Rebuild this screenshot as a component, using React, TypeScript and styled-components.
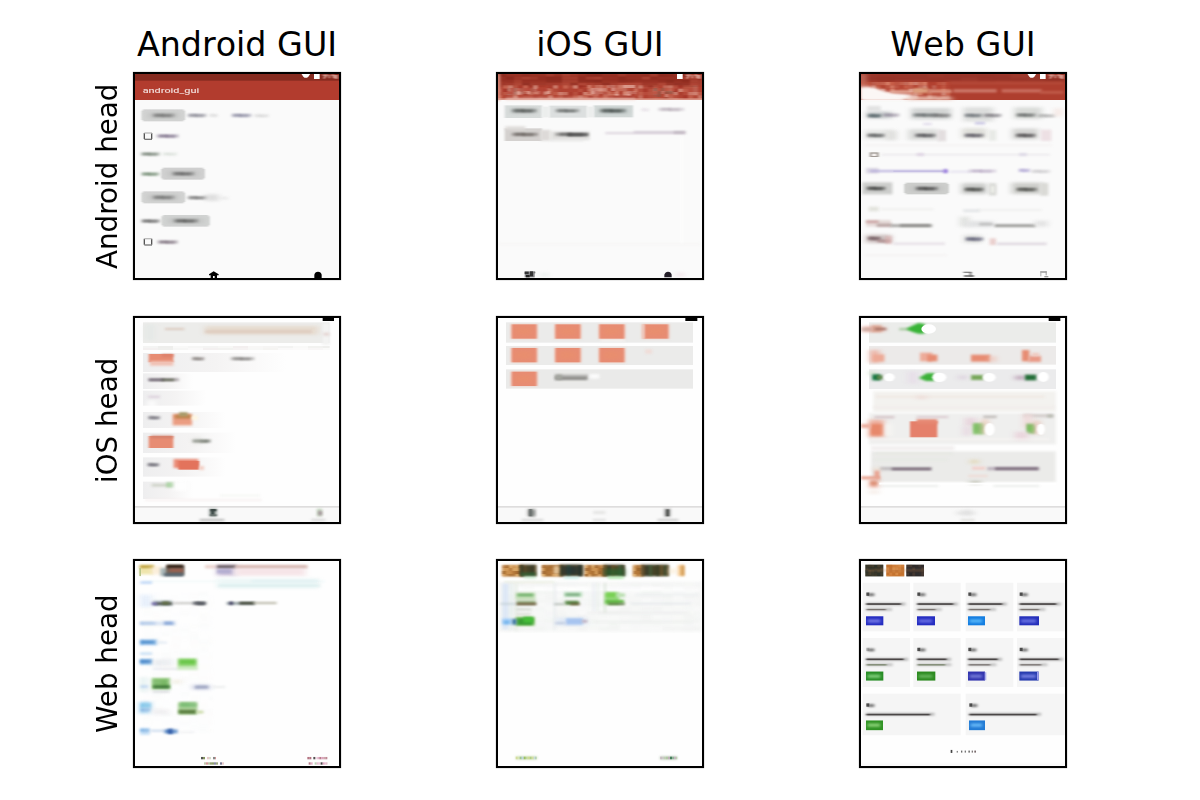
import React from "react";
import styled, { createGlobalStyle } from "styled-components";

const GlobalStyle = createGlobalStyle`
  * { box-sizing: border-box; }
  body { margin: 0; background: #fff; color: #000; font-family: "DejaVu Sans", sans-serif; }
`;

const Figure = styled.main`
  width: 1200px;
  height: 800px;
  overflow: hidden;
  padding: 25px 0 0 92px;
  display: flex;
  flex-direction: column;
`;

const Titles = styled.header`
  display: flex;
  gap: 155px;
  height: 47px;
  padding-left: 41px;
`;

const Title = styled.h2`
  margin: 0;
  width: 208px;
  text-align: center;
  font-size: 33.33px;
  line-height: 40px;
  font-weight: 400;
  font-kerning: none;
  white-space: nowrap;
`;

const Rows = styled.div`
  display: grid;
  grid-template-rows: 208px 208px 209px;
  row-gap: 35.5px;
`;

const Row = styled.section`
  display: flex;
`;

const RowLabel = styled.h3`
  margin: 0;
  width: 41px;
  padding-right: 2px;
  writing-mode: vertical-rl;
  transform: rotate(180deg);
  text-align: center;
  font-size: 27.78px;
  line-height: 28px;
  font-weight: 400;
  font-kerning: none;
  white-space: nowrap;
`;

const Plots = styled.div`
  display: flex;
  gap: 155px;
`;

const Frame = styled.figure`
  margin: 0;
  width: 208px;
  border: 2px solid #000;
  background: #fff;
  box-shadow: 0 0 1px rgba(0, 0, 0, 0.5);
`;

const Drawing = styled.svg`
  display: block;
  width: 204px;
  height: 100%;
`;

// x, y, width, height, fill, blur level (0-4), opacity
type Mark = [number, number, number, number, string, number?, number?];

function Marks({ items }: { items: Mark[] }) {
  return (
    <>
      {items.map(([x, y, w, h, fill, blur = 1, opacity = 1], i) => (
        <rect key={i} x={x} y={y} width={w} height={h} fill={fill} opacity={opacity}
          filter={blur ? `url(#soft${blur})` : undefined} />
      ))}
    </>
  );
}

// Deterministic patch of coloured cells, like the texture of a generated image.
function Grain({ x, y, w, h, cw, ch, colors, seed, opacity = 1, density = 1, blur = 1 }: {
  x: number; y: number; w: number; h: number; cw: number; ch: number;
  colors: string[]; seed: number; opacity?: number; density?: number; blur?: number;
}) {
  let s = seed * 7919 + 17;
  const rnd = () => {
    s = (s * 16807) % 2147483647;
    return s / 2147483647;
  };
  const cells: React.ReactElement[] = [];
  for (let b = y; b < y + h; b += ch) {
    for (let a = x; a < x + w; a += cw) {
      const c = colors[Math.floor(rnd() * colors.length)];
      const o = 0.3 + rnd() * 0.7;
      if (rnd() < density) {
        cells.push(<rect key={`${a}-${b}`} x={a} y={b} width={Math.min(cw, x + w - a)}
          height={Math.min(ch, y + h - b)} fill={c} opacity={o * opacity} />);
      }
    }
  }
  return <g filter={`url(#soft${blur})`}>{cells}</g>;
}

function Canvas({ x, y, bg, children }: { x: number; y: number; bg: string; children: React.ReactNode }) {
  return (
    <Drawing viewBox={`${x} ${y} 612 612`} preserveAspectRatio="none">
      <rect x={x} y={y} width={612} height={612} fill={bg} />
      {children}
    </Drawing>
  );
}

// A word too small to read: a dark core in a lighter smear.
const word = (x: number, y: number, w: number, c = "#555", o = 0.7): Mark[] => [
  [x + 2, y - 4, w - 4, 8, c, 2, o * 0.45],
  [x + w * 0.14, y - 3, w * 0.35, 6, c, 2, o * 0.65],
  [x + w * 0.42, y - 2, w * 0.4, 6, c, 2, o * 0.6],
];

const pill = (x: number, y: number, w: number, h: number, c = "#d2d3d2", t = "#555"): Mark[] => [
  [x + 5, y + 1, w - 10, h - 2, c, 4], [x + 1, y + 5, w - 2, h - 10, c, 4],
  [x + 22, y + 10, w - 44, h - 20, "#b4b5b4", 3, 0.5],
  ...word(x + w * 0.24, y + h / 2, w * 0.53, t, 0.85),
];

const StatusDots = ({ wifi }: { wifi?: boolean }) => (
  <g>
    {wifi && <path d="M664 161H691L685 170Q677 177 670 170Z" fill="#fff" filter="url(#soft1)" />}
    <rect x="702" y="161" width="17" height="16" fill="#fff" filter="url(#soft1)" />
    <path d="M728 166H740L731 176M748 165V175M754 166H761V175M766 165V176M771 165V176" fill="none" stroke="#e5b0a5" strokeWidth="5" filter="url(#soft4)" opacity=".8" />
  </g>
);

function AndroidAndroid() {
  return (
    <Canvas x={165} y={162} bg="#fafafa">
      <rect x="165" y="161" width="612" height="22" fill="#862b20" />
      <rect x="165" y="182" width="612" height="58" fill="#b23c2e" />
      <StatusDots wifi />
      <text x="188" y="219" fontSize="23" fontWeight="500" fontFamily="Roboto, sans-serif" fill="#fff" opacity=".8" textLength="170" lengthAdjust="spacingAndGlyphs" filter="url(#soft1)">android_gui</text>
      <Marks items={[
        ...pill(184, 267, 132, 38), ...word(320, 286, 62, "#556", 0.8), ...word(386, 286, 30, "#bbb", 0.5),
        ...word(452, 286, 65, "#557", 0.8), ...word(520, 287, 50, "#999", 0.35),
        ...word(228, 348, 70, "#546", 0.9),
        ...word(180, 402, 62, "#454", 0.85), ...word(245, 402, 50, "#aba", 0.4),
        ...word(181, 462, 60, "#464", 0.9), ...pill(243, 442, 132, 38, "#d0d0d0", "#444"),
        ...pill(184, 513, 132, 38), ...word(320, 533, 64, "#444", 0.85),
        [375, 523, 42, 20, "#ccc", 3, 0.6], ...word(420, 534, 30, "#ccc", 0.3),
        ...word(181, 603, 62, "#444", 1), ...pill(244, 584, 146, 37, "#d1d3d2", "#333"),
        ...word(230, 666, 66, "#545", 0.9),
      ]} />
      {[338, 655].map((y) => (
        <g key={y} filter="url(#soft1)" fill="none" strokeWidth="4">
          <path d={`M193 ${y + 1}V${y + 19}M215 ${y + 1}V${y + 19}`} stroke="#555" />
          <path d={`M193 ${y + 1}H216`} stroke="#bbb" /><path d={`M193 ${y + 20}H216`} stroke="#777" />
        </g>
      ))}
      <path d="M387 763L401 754L416 763V766H411V774H404V768H399V774H392V766H387Z" fill="#000" filter="url(#soft1)" />
      <path d="M703 774V764Q705 755 714 755Q723 755 725 764V774Z" fill="#000" filter="url(#soft1)" />
    </Canvas>
  );
}

function AndroidIos() {
  return (
    <Canvas x={33} y={162} bg="#fafafa">
      <rect x="33" y="161" width="612" height="79" fill="#b04535" />
      <rect x="33" y="161" width="612" height="26" fill="#973023" filter="url(#soft2)" />
      <Grain x={33} y={161} w={612} h={40} cw={24} ch={9} colors={["#84261b", "#b34b3a", "#963023"]} seed={4} opacity={0.6} blur={4} />
      <Grain x={33} y={196} w={612} h={42} cw={15} ch={10} colors={["#bd5140", "#cf6f5a", "#b43d2d", "#dc9a8a", "#a53024"]} seed={9} opacity={0.7} blur={4} />
      <Grain x={60} y={204} w={130} h={20} cw={10} ch={9} colors={["#f0c2b6", "#b8493b", "#b07a6d"]} seed={11} opacity={0.7} blur={4} />
      <Grain x={300} y={195} w={150} h={32} cw={12} ch={9} colors={["#f0c2b6", "#bf5441", "#db8d79"]} seed={13} opacity={0.7} blur={4} />
      <Grain x={500} y={204} w={65} h={30} cw={11} ch={9} colors={["#f0c2b6", "#bf5441", "#8a5b4b"]} seed={15} opacity={0.7} blur={4} />
      <g transform="translate(-132 0)"><StatusDots /></g>
      <Marks items={[
        [31, 161, 8, 80, "#e5a08f", 2], [33, 235, 612, 5, "#e9b3a5", 1, 0.7],
        [55, 233, 390, 8, "#f2cdc4", 2, 0.6],
        [53, 256, 112, 38, "#d7dbda", 4], [187, 257, 113, 36, "#dcdfdf", 4], [320, 256, 118, 36, "#d2d8d7", 4],
        [165, 260, 22, 32, "#eceeed", 4], [301, 260, 19, 32, "#eceeed", 4],
        [340, 265, 80, 16, "#a9b2b0", 3, 0.7], [75, 265, 70, 16, "#b2b7b5", 3, 0.7],
        ...word(72, 272, 79, "#3c403e", 1), ...word(203, 272, 76, "#3c403e", 0.9), ...word(336, 272, 82, "#2d3432", 1),
        ...word(511, 268, 83, "#8c7b8c", 0.65), ...word(460, 269, 30, "#cabaca", 0.4),
        [53, 325, 112, 38, "#d4d1cf", 4], [55, 319, 60, 10, "#dedbd9", 2], [160, 330, 30, 32, "#dddad8", 2], [190, 334, 118, 26, "#e1e0de", 2],
        ...word(72, 343, 83, "#4c4541", 1), ...word(203, 343, 104, "#3a3a3a", 1), [240, 341, 62, 6, "#444", 2],
        [355, 337, 240, 5, "#c9bccb", 2, 0.7], [440, 333, 155, 6, "#b09db4", 2, 0.4], [560, 334, 35, 7, "#aaa0aa", 2, 0.6],
        [190, 358, 100, 7, "#e5e5e5", 2, 0.6], [33, 670, 610, 5, "#f7f6f5", 2], [578, 350, 12, 320, "#fcfcfb", 2],
        [113, 754, 30, 18, "#848487", 1], [113, 755, 12, 7, "#333"], [129, 754, 9, 15, "#333"], [117, 765, 11, 7, "#222"], [140, 755, 5, 5, "#777"],
        [164, 758, 18, 12, "#dfe7e3", 3, 0.7], [570, 758, 20, 12, "#eedce2", 3, 0.8],
      ]} />
      <path d="M532 772V764Q535 755 543 755Q552 755 554 764V772Z" fill="#231e28" filter="url(#soft1)" />
    </Canvas>
  );
}

function AndroidWeb() {
  return (
    <Canvas x={33} y={162} bg="#fafafa">
      <rect x="33" y="161" width="612" height="79" fill="#ae3e2e" />
      <rect x="33" y="161" width="612" height="22" fill="#97352a" filter="url(#soft2)" />
      <Grain x={33} y={164} w={612} h={22} cw={50} ch={9} colors={["#9a3326", "#a94333", "#8f2f22"]} seed={6} opacity={0.5} blur={2} />
      <Grain x={50} y={186} w={250} h={52} cw={14} ch={10} colors={["#c85f49", "#d67d66", "#b84735", "#e0a291"]} seed={3} blur={4} />
      <path d="M33 196L80 206L110 216L180 222L205 240H33Z" fill="#fbf7f5" filter="url(#soft3)" />
      <path d="M33 202L75 208L105 220L150 230L165 240H33Z" fill="#fbf7f5" filter="url(#soft2)" />
      <path d="M180 230H300L310 240H170Z" fill="#ecc5b8" filter="url(#soft3)" />
      <g transform="translate(-132 0)"><StatusDots wifi /></g>
      <Marks items={[
        [33, 161, 12, 40, "#dc907f", 3], [125, 211, 65, 8, "#e4ab99", 2], [190, 205, 45, 14, "#dc9e7c", 2],
        [236, 210, 70, 8, "#dc9581", 2], [310, 208, 130, 9, "#d07f70", 2], [455, 208, 120, 9, "#cc7364", 2],
        [570, 213, 70, 8, "#c05d4b", 2], [300, 187, 340, 4, "#bc5644", 2],
        [52, 258, 40, 14, "#e2e2e2", 2], [50, 275, 75, 20, "#c6cacb", 3], [183, 264, 120, 34, "#d3d5d4", 3],
        [340, 262, 90, 42, "#dcdddc", 3], [493, 262, 82, 35, "#d9dbd8", 3],
        ...word(50, 287, 47, "#33454b", 1), ...word(97, 285, 55, "#776a82", 0.7),
        ...word(185, 285, 80, "#454c4e", 0.9), ...word(245, 286, 60, "#4c4b4d", 0.8),
        ...word(340, 286, 60, "#454c53", 0.9), ...word(398, 286, 60, "#534f57", 0.8),
        ...word(495, 285, 65, "#414645", 0.9), ...word(560, 287, 60, "#777", 0.6),
        [375, 306, 30, 7, "#c6c3e2", 2], [220, 310, 25, 4, "#d3cae2", 2], [615, 265, 20, 24, "#f5e6e2", 3],
        [45, 330, 85, 28, "#e4e5e3", 3], [110, 332, 30, 28, "#e0e0de", 3], [175, 328, 90, 32, "#d9dad8", 3], [263, 330, 25, 34, "#e3dedf", 2],
        [335, 325, 75, 30, "#deded9", 3], [417, 330, 22, 32, "#e8eae6", 2], [487, 326, 78, 32, "#d3d3d1", 3],
        [573, 329, 31, 34, "#ede0e4", 2],
        ...word(48, 346, 59, "#363839", 1), ...word(192, 346, 68, "#2f2e33", 1), ...word(340, 346, 64, "#383543", 1), ...word(494, 346, 66, "#2b282b", 1),
        [45, 374, 560, 3, "#f2edee", 2], [59, 397, 27, 14, "#a19b96", 4], [65, 401, 15, 7, "#f7f3f1", 4],
        [95, 402, 505, 4, "#e2dfe3", 2, 0.8], [200, 400, 22, 7, "#dccfe1", 2], [508, 400, 22, 7, "#d9d4e4", 2],
        [48, 444, 38, 16, "#dad6e2", 2], [60, 451, 233, 5, "#b0a6da", 2], [130, 452, 150, 3, "#b3aadc", 1, 0.6], [281, 448, 11, 11, "#9070dc", 2], [300, 453, 60, 4, "#ddd8eb", 2],
        ...word(353, 453, 88, "#a18eb2", 0.8), ...word(503, 451, 40, "#8272bd", 0.7), ...word(540, 454, 64, "#a7a5aa", 0.6),
        [37, 487, 90, 36, "#cccdcb", 2], ...word(47, 505, 62, "#181917", 1),
        ...pill(162, 487, 135, 37, "#cdcecc", "#111"), [335, 490, 75, 32, "#c8c9c7", 3], ...word(340, 508, 64, "#242623", 1),
        [417, 490, 22, 36, "#d6d7d3", 2], [423, 497, 10, 22, "#f0f1ec", 2], [485, 488, 92, 34, "#cccdc9", 3], ...word(496, 508, 68, "#2b2c28", 1),
        [571, 489, 24, 38, "#dadad6", 2], [56, 560, 30, 14, "#e3e4dd", 2], [90, 566, 160, 4, "#ececea", 2], [340, 568, 50, 8, "#e2e4e6", 2],
        [385, 568, 190, 4, "#ececea", 2], [48, 600, 75, 20, "#e6dcda", 2], [48, 602, 38, 7, "#cba1a0", 2], [80, 611, 45, 9, "#b9a4a3", 2],
        [122, 613, 125, 8, "#a5a4a2", 2], [150, 614, 90, 5, "#7c7c7a", 2], [330, 590, 28, 30, "#e0e2df", 3], [350, 603, 80, 18, "#e1e2e3", 3],
        [388, 609, 40, 7, "#bbb", 2], [434, 613, 123, 8, "#969693", 2], [555, 602, 38, 18, "#e3e3e3", 3],
        [48, 644, 75, 25, "#cec2c1", 3], ...word(50, 655, 45, "#583e45", 1), ...word(78, 663, 47, "#9e7678", 0.8),
        [106, 648, 20, 24, "#dba8a7", 2, 0.5], [130, 668, 155, 6, "#e3dce3", 2], [343, 645, 50, 24, "#dbdcda", 3], ...word(343, 657, 60, "#3e3e5c", 1),
        [419, 655, 19, 20, "#ead0ce", 2], [440, 668, 150, 7, "#ded7df", 2], [45, 704, 245, 3, "#f2edee", 2],
        [340, 755, 24, 4, "#888", 4], [342, 766, 30, 4, "#555", 4], [359, 756, 5, 14, "#666", 4],
        [571, 754, 19, 4, "#888"], [571, 754, 3, 15, "#aaa"], [587, 754, 3, 12, "#999"], [583, 768, 12, 4, "#999"],
      ]} />
    </Canvas>
  );
}

const coral = "#e78c73";

function TabBar({ x }: { x: number }) {
  return <><rect x={x} y="588" width="612" height="50" fill="#f9f9f9" /><rect x={x} y="588" width="612" height="5" fill="#dedddd" /></>;
}

function IosAndroid() {
  return (
    <Canvas x={165} y={24} bg="#fefefe">
      <rect x="189" y="37" width="560" height="62" fill="#ececea" filter="url(#soft1)" />
      <Grain x={189} y={108} w={560} h={12} cw={45} ch={6} colors={["#eeeeec", "#f4f3f1", "#f0ecec"]} seed={5} />
      {[[129, 57, 430], [190, 47, 150], [242, 45, 190], [306, 48, 250], [368, 61, 280], [442, 58, 250], [515, 52, 150]].map(([y, h, w]) => (
        <rect key={y} x="189" y={y} width={w} height={h} fill="url(#fadeRow)" filter="url(#soft1)" />
      ))}
      <Marks items={[
        [195, 43, 28, 48, "#dfe6e4", 3, 0.6], [255, 54, 58, 6, "#dccabf", 2], [375, 48, 340, 26, "#e6dbcf", 3],
        [375, 61, 320, 8, "#dcc6ba", 2, 0.8], [727, 40, 22, 65, "#f3f3f2", 2], [730, 68, 18, 9, "#e5d5d2", 2],
        [206, 132, 74, 25, coral, 4], [210, 153, 70, 14, "#f0c0b3", 2], [246, 133, 34, 7, "#d97c69", 2], ...word(333, 146, 43, "#544b47", 0.8), ...word(450, 146, 75, "#4e4b49", 0.8),
        [205, 205, 92, 8, "#ada6ab", 2], [207, 207, 45, 5, "#584f60", 2], [245, 207, 38, 5, "#485139", 2],
        [205, 257, 35, 7, "#ddd2dd", 2], [205, 272, 20, 20, "#fff", 3],
        ...word(202, 323, 41, "#464350", 0.9), [278, 312, 58, 34, "#eb9d82", 2], [284, 314, 50, 12, "#b98042", 2, 0.8], [297, 307, 26, 12, "#a59b68", 2], [335, 317, 18, 13, "#fff6e0", 2],
        [206, 378, 74, 36, coral, 4], [213, 377, 66, 7, "#cf806d", 2], ...word(335, 393, 60, "#2c3527", 1), [340, 380, 26, 24, "#dfe0da", 3, 0.5],
        ...word(200, 464, 40, "#454350", 1), [281, 447, 74, 27, "#ea8a75", 2], [295, 453, 62, 26, "#e3735c", 4], [359, 468, 12, 12, "#f3c9bd", 2],
        [215, 521, 67, 9, "#d0d4ca", 2], [259, 517, 22, 15, "#a9d3a2", 2], [282, 514, 42, 28, "#fefefe", 3],
        [195, 568, 350, 5, "#f7f0f0", 2], [420, 554, 120, 5, "#f4f6f2", 2],
      ]} />
      <TabBar x={165} />
      <Marks items={[
        [728, 22, 34, 11, "#000"], [387, 596, 24, 23, "#a3aba7", 2], [393, 597, 10, 20, "#344240", 4], [392, 597, 17, 7, "#3a4644", 4],
        [390, 613, 20, 6, "#6a7471", 4], [359, 627, 74, 6, "#b8b8b8", 2], [711, 596, 15, 23, "#c3d4be", 2], [715, 603, 11, 13, "#a18f97", 2], [694, 627, 42, 5, "#d0d0d0", 2],
      ]} />
    </Canvas>
  );
}

function IosIos() {
  return (
    <Canvas x={33} y={24} bg="#fefefe">
      <Marks items={[
        [57, 37, 561, 61, "#ebebea"], [57, 108, 561, 57, "#ebebea"], [57, 178, 561, 58, "#eaeae9"],
        [475, 118, 20, 13, "#f0dcd7", 2], [340, 87, 75, 8, "#f4f2f0", 2],
        [205, 193, 98, 16, "#bfbebc", 2], [205, 200, 95, 9, "#8a8986", 2], [205, 194, 20, 15, "#a3a59f", 2], [308, 192, 29, 14, "#fbfbfb", 2],
        ...([[74, 43], [205, 43], [337, 43], [469, 43], [74, 114], [205, 114], [337, 114], [74, 185]].flatMap(([x, y]): Mark[] => [
          [x - 2, y - 1, 80, 45, "#f0cbbf", 2, 0.8], [x, y, 75, 43, coral, 4], [x + 12, y + 10, 48, 22, "#eb9167", 3, 0.4],
        ])),
        [464, 43, 9, 43, "#eecbc0", 4],
      ]} />
      <TabBar x={33} />
      <Marks items={[
        [595, 22, 36, 11, "#000"], [119, 597, 28, 22, "#d0cece", 2], [126, 599, 18, 20, "#8f9390", 2], [126, 597, 9, 22, "#626866", 4],
        [531, 596, 20, 24, "#aaa", 2], [538, 598, 8, 21, "#424542", 4], [319, 603, 36, 9, "#e5e5e4", 2],
        [104, 627, 65, 6, "#d4d4d4", 2], [318, 627, 38, 6, "#ddd", 2], [512, 627, 62, 6, "#cbcbcb", 2],
      ]} />
    </Canvas>
  );
}

function IosWeb() {
  return (
    <Canvas x={33} y={24} bg="#fefefe">
      <Marks items={[
        [57, 37, 561, 61, "#ebecea"], [57, 108, 561, 56, "#eceae9"], [57, 178, 561, 59, "#ebebec"],
        [70, 244, 548, 62, "#f3f2ef", 2], [57, 310, 561, 93, "#efefee", 2], [63, 424, 554, 92, "#ebebe9", 2], [63, 407, 250, 15, "#f3f0f0", 2],
        [36, 49, 66, 17, "#e8b3a8", 3], [65, 46, 30, 20, "#dba896", 2], [74, 54, 35, 6, "#9f6b60", 2], [36, 55, 28, 6, "#bfa9a2", 2],
        [148, 54, 45, 7, "#a8c9a0", 2],
        [60, 120, 28, 38, "#edb6a8", 3], [68, 133, 35, 22, "#edaa97", 2], [210, 128, 37, 26, "#edab99", 2], [232, 134, 30, 20, coral, 2],
        [363, 134, 58, 21, coral, 2], [421, 138, 15, 18, "#efc4b8", 3], [516, 120, 22, 34, coral, 2], [536, 138, 37, 18, "#e99b88", 2], [545, 129, 23, 8, "#f1c5ba", 2],
        [60, 184, 18, 12, "#d3e3cc", 3], [67, 193, 24, 18, "#0e733e", 2], [80, 196, 18, 12, "#5d8547", 2],
        [363, 195, 37, 15, "#78a85b", 2], [325, 196, 26, 12, "#ded4df", 3], [495, 197, 34, 12, "#c0a9bb", 3], [525, 194, 34, 17, "#246e38", 2],
        [173, 185, 30, 36, "#e7dfe8", 3], [70, 290, 545, 4, "#f0eae8", 2], [78, 257, 505, 6, "#f0e8e2", 2],
        [200, 257, 30, 10, "#eeddd8", 3],
        [57, 329, 45, 53, "#eeae9c", 3], [62, 342, 38, 34, "#e7886b", 2], [33, 342, 30, 12, "#edaf9f", 2], [73, 318, 60, 7, "#d4c4c8", 2],
        [106, 340, 16, 38, "#faf9f5", 3], [180, 334, 82, 48, "#e5806b", 4], [200, 327, 62, 14, "#e68873", 2], [200, 318, 95, 6, "#dccbd0", 2],
        [345, 323, 34, 25, "#e8d5dd", 3], [339, 349, 25, 28, "#e8dbe2", 3], [369, 339, 32, 34, "#8cc573", 2], [379, 345, 20, 20, "#74b85c", 3], [397, 327, 16, 44, "#ebcab8", 3],
        [400, 317, 40, 7, "#bfbab8", 2], [520, 313, 90, 9, "#d3cccb", 2], [592, 314, 17, 8, "#b5b9af", 2],
        [520, 312, 25, 43, "#f0dada", 3], [529, 341, 26, 30, "#83b968", 2], [537, 349, 16, 16, "#71c157", 2], [553, 331, 15, 42, "#e8c0b2", 3],
        [495, 365, 40, 25, "#ead6dd", 3], [60, 386, 540, 4, "#f8f4f3", 2],
        [90, 471, 155, 10, "#c0bcbf", 2], [125, 474, 118, 6, "#6f5d6e", 2], [412, 471, 155, 10, "#beb4be", 2], [435, 473, 130, 6, "#685667", 2],
        [73, 428, 235, 5, "#e4e7e0", 2], [73, 447, 220, 4, "#e4e9e1", 2], [360, 449, 26, 12, "#e3d9bb", 3], [366, 470, 40, 9, "#f2cfca", 2],
        [73, 473, 15, 10, "#eedbca", 3], [73, 482, 16, 24, "#e8a391", 2], [33, 499, 57, 9, "#e8a18e", 2], [60, 504, 24, 30, "#ebaf9f", 3], [61, 514, 20, 12, "#dc9178", 2],
        [355, 495, 58, 6, "#efdad4", 2], [359, 513, 34, 9, "#bcbdaf", 3], [88, 518, 530, 6, "#fff"], [90, 526, 175, 4, "#e5e7e4", 2], [430, 526, 138, 4, "#e5e7e4", 2], [57, 540, 30, 12, "#f6eee9", 3],
      ]} />
      <path d="M168 57L185 48L205 39L225 42L223 71H205L188 66Z" fill="#38b437" filter="url(#soft2)" />
      <ellipse cx="236" cy="57" rx="22" ry="14" fill="#fff" filter="url(#soft1)" />
      <path d="M206 204L230 190L253 189V213H228Z" fill="#3bb138" filter="url(#soft2)" />
      {[[118, 202, 16, 12], [268, 202, 21, 14], [418, 202, 19, 13], [580, 201, 16, 15], [419, 358, 15, 19], [573, 358, 12, 17]].map(([a, b, rx, ry]) => (
        <ellipse key={`${a}-${b}`} cx={a} cy={b} rx={rx} ry={ry} fill="#fff" filter="url(#soft4)" />
      ))}
      <TabBar x={33} />
      <Marks items={[[596, 22, 35, 11, "#000"], [320, 604, 54, 10, "#e2e2e1", 3], [344, 599, 14, 18, "#dedede", 3], [332, 627, 42, 6, "#deddda", 2]]} />
    </Canvas>
  );
}

function WebAndroid() {
  return (
    <Canvas x={165} y={28} bg="#fefefe">
      <Marks items={[
        [178, 40, 43, 28, "#efe5ac", 2], [180, 41, 42, 8, "#bc9c36", 2], [178, 49, 5, 24, "#b8c58a"], [217, 43, 29, 25, "#fbecd5", 3],
        [241, 49, 70, 24, "#a8b5b7", 2], [258, 40, 54, 30, "#77675b", 2], [261, 40, 49, 9, "#2e2013", 2], [269, 51, 40, 10, "#9a5f50", 2], [252, 65, 58, 8, "#51616f", 2],
        [375, 40, 308, 10, "#ecd5cf", 2], [411, 40, 57, 32, "#cfc3da", 3], [411, 41, 57, 8, "#5f5659", 2], [411, 53, 44, 12, "#b1acd0", 2], [466, 46, 210, 26, "#f6e5e8", 3], [466, 42, 214, 6, "#cbada6", 2],
        [190, 87, 545, 4, "#eef8f9", 2], [410, 80, 307, 30, "#edf7f7", 3], [415, 99, 304, 5, "#d5ebeb", 2], [515, 86, 200, 4, "#daedf1", 2], [181, 89, 35, 7, "#bad4f7", 2],
        [181, 128, 34, 38, "#e6effc", 3], [219, 146, 58, 16, "#b4c2c9", 2], [227, 152, 50, 6, "#12160c", 2], [246, 149, 22, 9, "#435421", 2], [215, 152, 16, 7, "#504294", 2], [280, 152, 57, 4, "#a5a6a2", 2],
        ...word(334, 154, 48, "#0e131c", 1), [347, 151, 28, 7, "#3c4048", 2], [440, 151, 85, 7, "#859396", 2], [478, 151, 45, 6, "#252712", 2], [448, 150, 11, 8, "#29234e", 2], [520, 151, 70, 5, "#afad9a", 2],
        [180, 208, 108, 12, "#d6e2f3", 2], [181, 211, 45, 6, "#a1bde6", 2], [252, 209, 28, 9, "#7297d2", 2],
        [180, 262, 52, 18, "#afd2f4", 2], [182, 265, 44, 11, "#4e90cf", 2], [231, 269, 30, 5, "#d8e3ef", 2],
        [181, 301, 35, 7, "#c0dbf4", 2], [180, 320, 38, 18, "#9bc8ed", 2], [181, 323, 35, 10, "#4585c8", 2], [219, 321, 58, 21, "#eaecf0", 3], [220, 348, 73, 4, "#d9dde5", 2],
        [292, 319, 61, 34, "#c6e8b8", 2], [296, 320, 52, 22, "#78cd54", 2], [300, 325, 44, 9, "#52bd2c", 2],
        [183, 375, 20, 44, "#e1f0ef", 3], [182, 399, 22, 8, "#bad4ef", 2], [215, 377, 56, 35, "#99ce85", 2], [220, 382, 45, 24, "#69af52", 2], [219, 400, 50, 8, "#276422", 2], [218, 416, 50, 4, "#c1c3c8", 2],
        [275, 382, 30, 12, "#f3efe2", 3], [338, 397, 51, 15, "#c8cce1", 3], [345, 401, 40, 7, "#8992b4", 2], [398, 402, 38, 4, "#e3e6e6", 2],
        [180, 448, 32, 36, "#a6d6f2", 3], [182, 453, 30, 13, "#7ec5ea", 2], [182, 468, 30, 9, "#7fb0df", 2], [217, 470, 50, 17, "#f0eff1", 3],
        [294, 450, 58, 36, "#a6d190", 2], [299, 450, 50, 14, "#74b86b", 2], [296, 472, 52, 12, "#386519", 2], [350, 475, 20, 8, "#bed392", 2],
        [181, 526, 28, 21, "#c3dff7", 2], [181, 530, 27, 7, "#6ea9e0", 2], [213, 532, 40, 5, "#bbd0e9", 2], [253, 531, 40, 11, "#5a8dc9", 2], [263, 529, 16, 15, "#2855a5", 2], [298, 537, 45, 4, "#eceef0", 2],
      ]} />
      <Grain x={189} y={120} w={210} h={420} cw={28} ch={12} colors={["#f1f5f4", "#fff", "#f8f6f4", "#f8fbff"]} seed={21} opacity={0.2} blur={2} />
      <Grain x={363} y={613} w={45} h={7} cw={6} ch={7} colors={["#7d8e55", "#333", "#c98383", "#9cc69b"]} seed={7} density={0.75} />
      <Grain x={372} y={629} w={60} h={7} cw={6} ch={7} colors={["#7d8e55", "#333", "#c98383", "#557"]} seed={17} density={0.8} />
      <Grain x={676} y={613} w={68} h={7} cw={6} ch={7} colors={["#b06e7c", "#333", "#dca0bc", "#a8c3a0"]} seed={8} density={0.85} />
      <Grain x={686} y={629} w={56} h={7} cw={6} ch={7} colors={["#b06e7c", "#444", "#dca0bc", "#a8c3a0"]} seed={18} density={0.75} />
    </Canvas>
  );
}

function WebIos() {
  return (
    <Canvas x={33} y={28} bg="#fefefe">
      <Marks items={[[33, 89, 612, 150, "#f6f7f6", 2], [90, 106, 548, 12, "#fff", 2], [52, 89, 150, 5, "#e8eddc", 2]]} />
      <Grain x={46} y={92} w={595} h={145} cw={32} ch={12} colors={["#fdfdfc", "#f1f2f1", "#f6f7f8"]} seed={31} opacity={0.5} blur={2} />
      {[[46, 62], [165, 62], [293, 62], [438, 30]].map(([a, w], i) => (
        <React.Fragment key={a}>
          <Marks items={[[a, 40, w, 34, "#c38546", 2]]} />
          <Grain x={a} y={40} w={w} h={34} cw={10} ch={9} colors={["#925b1f", "#dba561", "#a2682c", "#e9be7b", "#8a5522"]} seed={40 + i} opacity={0.7} blur={4} />
        </React.Fragment>
      ))}
      {[[98, 50], [218, 70], [350, 63], [463, 82]].map(([a, w], i) => (
        <React.Fragment key={a}>
          <rect x={a} y="39" width={w} height="34" fill="#4b4327" filter="url(#soft2)" />
          <Grain x={a} y={40} w={w} h={34} cw={11} ch={34} colors={["#303c23", "#6f5126", "#182d2c", "#3d6542", "#876937"]} seed={50 + i} opacity={0.6} blur={4} />
        </React.Fragment>
      ))}
      <Marks items={[
        [227, 42, 50, 28, "#172f3a", 3, 0.65], [355, 51, 55, 22, "#26662f", 3, 0.7], [102, 62, 44, 12, "#2f6738", 2, 0.7],
        [200, 43, 16, 24, "#f6e1bd", 2, 0.7], [112, 75, 35, 5, "#c7f0cf", 2], [231, 75, 45, 6, "#c5efe9", 2], [363, 74, 47, 7, "#b2edaf", 2],
        [572, 40, 20, 33, "#f7cf9b", 2], [583, 41, 8, 31, "#c98f45", 2], [552, 50, 10, 16, "#fae2bb", 3],
        [46, 95, 19, 137, "#dce7f5", 2], [71, 93, 5, 140, "#dce9e6", 2], [86, 95, 4, 142, "#dfe9dd", 2],
        [201, 93, 4, 140, "#e5ebec", 2], [318, 93, 4, 85, "#e4e8f1", 2], [330, 93, 4, 85, "#e4ece7", 2], [352, 93, 4, 90, "#cfddcb", 2],
        [86, 122, 59, 22, "#c6e0b9", 2], [91, 126, 48, 7, "#65aa61", 2], [89, 146, 57, 12, "#9cb487", 2], [88, 154, 60, 5, "#573819", 2], [40, 154, 46, 4, "#bfccd2", 2],
        [88, 170, 45, 5, "#ccd1c8", 2], [88, 185, 43, 4, "#ccd0c5", 2], [86, 195, 57, 26, "#86c56c", 2], [91, 199, 46, 20, "#389b34", 2], [109, 195, 29, 17, "#45bd39", 2],
        [46, 200, 28, 18, "#a1cef9", 2], [51, 207, 15, 8, "#70b0e8", 2], [76, 201, 12, 17, "#2e6c9e", 2],
        [231, 120, 55, 16, "#c9e6cc", 2], [235, 125, 44, 7, "#72a577", 2], [233, 146, 42, 13, "#95b485", 2], [237, 150, 38, 6, "#3f722f", 2], [201, 155, 32, 4, "#a3aca2", 2], [250, 155, 28, 4, "#664222", 2],
        [208, 197, 90, 24, "#e1eaf6", 3], [237, 199, 50, 19, "#a7c4ef", 2], [285, 204, 16, 8, "#bbacbd", 2], [205, 211, 30, 5, "#b9c5dc", 2],
        [353, 122, 44, 36, "#9bdc82", 2], [357, 122, 31, 15, "#79d054", 2], [356, 144, 55, 10, "#62b944", 2], [363, 154, 50, 5, "#45612b", 2], [388, 124, 26, 12, "#bce0b3", 2],
        [430, 153, 182, 4, "#e2e6ea", 2], [445, 127, 190, 4, "#eaeef0", 2], [300, 181, 310, 4, "#ebedec", 2], [318, 208, 300, 4, "#ecefec", 2],
        [87, 611, 63, 10, "#d3e3bf", 2], [519, 611, 51, 10, "#c6d3c3", 2],
      ]} />
      <Grain x={86} y={612} w={62} h={8} cw={6} ch={8} colors={["#5fa25b", "#9ac060", "#b5cde7", "#d0db91"]} seed={61} />
      <Grain x={519} y={612} w={52} h={8} cw={6} ch={8} colors={["#457e5b", "#353d3c", "#a6c196", "#bda7b4"]} seed={62} />
    </Canvas>
  );
}

type CardSpec = { x: number; y: number; w: number; h: number; line: number; short?: number; btn: string; glow: string; bw: number; tx?: number };

const cards: CardSpec[] = [
  { x: 38, y: 93, w: 142, h: 145, line: 118, short: 78, btn: "#242cc0", glow: "#8589ee", bw: 52 },
  { x: 190, y: 93, w: 142, h: 145, line: 122, short: 74, btn: "#242cc0", glow: "#757beb", bw: 54, tx: 201 },
  { x: 347, y: 93, w: 143, h: 145, line: 116, short: 84, btn: "#147de0", glow: "#66c4ff", bw: 51, tx: 354 },
  { x: 501, y: 93, w: 143, h: 145, line: 124, short: 78, btn: "#242fba", glow: "#7781eb", bw: 59, tx: 508 },
  { x: 38, y: 258, w: 142, h: 146, line: 126, short: 80, btn: "#278c25", glow: "#91db8b", bw: 52 },
  { x: 190, y: 258, w: 142, h: 146, line: 102, short: 103, btn: "#2c8a20", glow: "#70bd66", bw: 55, tx: 201 },
  { x: 347, y: 258, w: 143, h: 146, line: 102, short: 85, btn: "#3033ae", glow: "#8087de", bw: 51, tx: 354 },
  { x: 501, y: 258, w: 143, h: 146, line: 131, short: 84, btn: "#263bae", glow: "#8790ee", bw: 58, tx: 508 },
  { x: 38, y: 424, w: 294, h: 124, line: 205, btn: "#309224", glow: "#9cdd87", bw: 51 },
  { x: 347, y: 424, w: 297, h: 124, line: 216, btn: "#237bd4", glow: "#76c6ff", bw: 48, tx: 357 },
];

function WebWeb() {
  return (
    <Canvas x={33} y={28} bg="#fefefe">
      <Marks items={[[46, 39, 54, 35, "#32352b"], [109, 39, 54, 35, "#c87935"], [169, 39, 53, 35, "#342f2d"]]} />
      <Grain x={46} y={39} w={53} h={34} cw={9} ch={8} colors={["#24302c", "#4a3e29", "#5d4a31", "#272e2a"]} seed={71} opacity={0.6} />
      <Grain x={109} y={39} w={53} h={34} cw={9} ch={8} colors={["#d98946", "#bf6c2a", "#e8a15d"]} seed={72} opacity={0.6} />
      <Grain x={169} y={39} w={53} h={34} cw={9} ch={8} colors={["#282c31", "#554235", "#262424"]} seed={73} opacity={0.6} />
      <Marks items={[[46, 54, 175, 4, "#c18352", 2, 0.5]]} />
      {cards.map((c, i) => {
        const t = c.tx ?? 48;
        const wide = c.short === undefined;
        const by = wide ? c.y + 80 : c.y + 100;
        return (
          <g key={i}>
            <Marks items={[
              [c.x, c.y, c.w, c.h, "#f5f5f5"], [t + 1, c.y + 29, 9, 10, "#333", 1, i === 4 ? 0.3 : 0.85], [t + 6, c.y + 32, 19, 7, "#444", 2, 0.9],
              [t, c.y + (wide ? 58 : 60), c.line, 7, "#aaa", 2], [t + 1, c.y + (wide ? 60 : 61), c.line - 14, 5, "#4a4646", 4],
            ]} />
            {!wide && <Marks items={[[t, c.y + 76, c.short!, 7, "#bababa", 2], [t + 2, c.y + 78, c.short! - 20, 4, i === 4 || i === 5 ? "#77846a" : "#78726f", 4]]} />}
            <Marks items={[
              [t, by, c.bw, wide ? 29 : 27, c.btn], [t + 5, by + 9, c.bw - 14, 10, c.glow, 2, 0.8],
            ]} />
          </g>
        );
      })}
      <Marks items={[
        [302, 592, 5, 9, "#444"], [320, 595, 4, 5, "#888"], [333, 594, 4, 6, "#6a6a6a"], [344, 594, 4, 6, "#777"], [355, 594, 5, 6, "#777"], [365, 594, 4, 6, "#7e7878"], [373, 594, 5, 6, "#776869"],
        [561, 359, 5, 24, "#9da0ef"], [404, 360, 5, 24, "#aeb2ee"], [33, 633, 612, 8, "#f7f7f7", 2],
      ]} />
    </Canvas>
  );
}

const rows = [
  { label: "Android head", plots: [AndroidAndroid, AndroidIos, AndroidWeb] },
  { label: "iOS head", plots: [IosAndroid, IosIos, IosWeb] },
  { label: "Web head", plots: [WebAndroid, WebIos, WebWeb] },
];

const Defs = styled.svg`
  display: block;
  width: 0;
  height: 0;
`;

export default function App() {
  return (
    <>
      <GlobalStyle />
      <Defs aria-hidden="true">
        <defs>
          {["1.8 1.6", "5.5 2.4", "9 5", "3.2 2.2"].map((d, i) => (
            <filter key={d} id={`soft${i + 1}`} filterUnits="userSpaceOnUse" x="0" y="0" width="800" height="800" colorInterpolationFilters="sRGB">
              <feGaussianBlur stdDeviation={d} />
            </filter>
          ))}
          <linearGradient id="fadeRow">
            <stop offset="0" stopColor="#eeeeef" />
            <stop offset=".5" stopColor="#f4f3f3" />
            <stop offset="1" stopColor="#fefefe" />
          </linearGradient>
        </defs>
      </Defs>
      <Figure>
        <Titles>
          <Title>Android GUI</Title>
          <Title>iOS GUI</Title>
          <Title>Web GUI</Title>
        </Titles>
        <Rows>
          {rows.map(({ label, plots }) => (
            <Row key={label}>
              <RowLabel>{label}</RowLabel>
              <Plots>
                {plots.map((Plot, i) => (
                  <Frame key={i}><Plot /></Frame>
                ))}
              </Plots>
            </Row>
          ))}
        </Rows>
      </Figure>
    </>
  );
}
